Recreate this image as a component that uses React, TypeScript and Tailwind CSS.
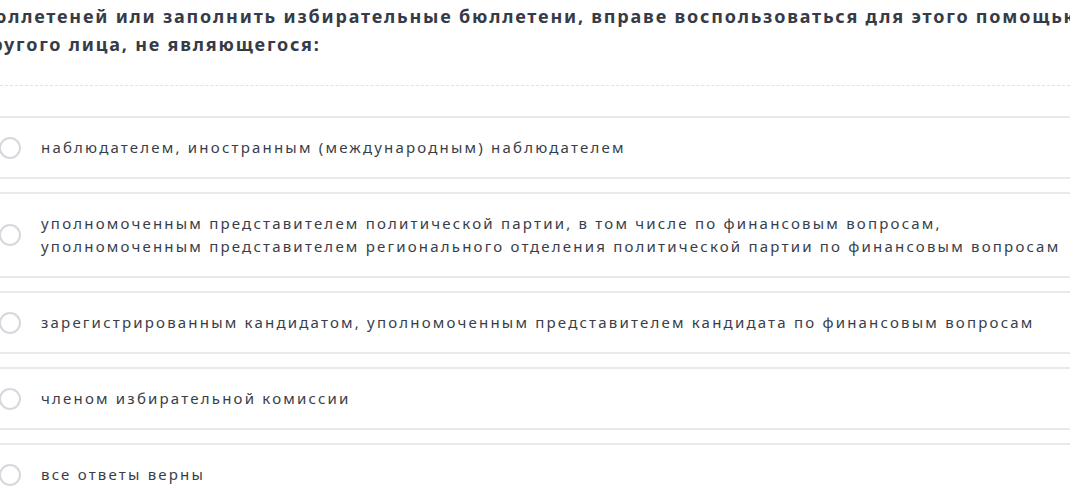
import React from 'react';

const options = [
  'наблюдателем, иностранным (международным) наблюдателем',
  'уполномоченным представителем политической партии, в том числе по финансовым вопросам, уполномоченным представителем регионального отделения политической партии по финансовым вопросам',
  'зарегистрированным кандидатом, уполномоченным представителем кандидата по финансовым вопросам',
  'членом избирательной комиссии',
  'все ответы верны',
];

export default function App() {
  return (
    <div className="min-h-screen w-full overflow-hidden bg-white font-['Noto_Sans',sans-serif] text-[#353b47]">
      {/* Question text (scrolled view, starts off-screen left) */}
      <div className="-ml-[22px] pt-[2px] whitespace-nowrap text-[18px] font-bold leading-[28px] tracking-[1.8px]">
        <div>бюллетеней или заполнить избирательные бюллетени, вправе воспользоваться для этого помощью</div>
        <div>другого лица, не являющегося:</div>
      </div>

      <div className="mt-[27px] border-t border-dashed border-[#e2e2e2]" />

      <div className="mt-[30px] flex flex-col gap-[13px]">
        {options.map((text, i) => (
          <label
            key={i}
            className="flex items-center gap-[20px] border-y-2 border-[#e6e9ed] py-[18px] pr-[8px] -ml-[1px]"
          >
            <span className="h-[22px] w-[22px] shrink-0 rounded-full border-2 border-[#d5d9de] bg-white" />
            <span className="text-[15px] leading-[23px] tracking-[2.2px] text-[#383e49]">{text}</span>
          </label>
        ))}
      </div>
    </div>
  );
}
